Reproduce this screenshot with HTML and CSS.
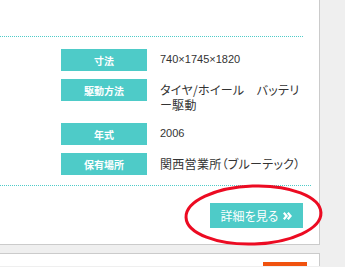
FILE: index.html
```html
<!DOCTYPE html>
<html lang="ja">
<head>
    <meta charset="UTF-8">
    <title>車両情報</title>
    <link rel="stylesheet" href="styles.css">
</head>
<body>
    <div class="card">
        <div class="card-head"></div>
        <div class="spec-list">
            <div class="spec-label">寸法</div>
            <div class="spec-value num">740×1745×1820</div>
            <div class="spec-label">駆動方法</div>
            <div class="spec-value">タイヤ/ホイール　バッテリー駆動</div>
            <div class="spec-label">年式</div>
            <div class="spec-value num">2006</div>
            <div class="spec-label">保有場所</div>
            <div class="spec-value">関西営業所（ブルーテック）</div>
        </div>
        <div class="card-foot">
            <a href="#" class="more-btn">詳細を見る
                <svg class="more-arrow" width="9" height="8" viewBox="0 0 9 8">
                    <path d="M0.8 0.8 L3.6 4 L0.8 7.2 M4.8 0.8 L7.6 4 L4.8 7.2" fill="none" stroke="white" stroke-width="2.2" />
                </svg>
            </a>
        </div>
    </div>

    <div class="card next-card">
        <div class="tag"></div>
    </div>

    <!-- 注釈の赤丸 -->
    <svg class="mark" width="345" height="267" viewBox="0 0 345 267">
        <ellipse cx="253.5" cy="215" rx="67.5" ry="29" fill="none" stroke="#ec0b22" stroke-width="3" transform="rotate(-2 253.5 215)" />
    </svg>
</body>
</html>
```

FILE: styles.css
```css
body {
    margin: 0;
    background-color: #efefef;
    font-family: 'Noto Sans CJK JP', 'Noto Sans', sans-serif;
    color: #333;
    width: 345px;
    height: 267px;
    overflow: hidden;
    position: relative;
}
.card {
    background-color: white;
    border-right: 1px solid #cbcbcb;
    border-bottom: 1px solid #cbcbcb;
    box-sizing: border-box;
    width: 320px;
    padding-right: 16px;
}
.card-head {
    height: 36px;
    border-bottom: 1px dotted #4ecbc8;
}
.spec-list {
    display: grid;
    grid-template-columns: 86px 141px;
    column-gap: 13px;
    row-gap: 8px;
    margin: 12px 0 0 61px;
}
.spec-label {
    height: 22px;
    background-color: #4ecbc8;
    color: white;
    font-size: 10px;
    font-weight: bold;
    display: flex;
    align-items: center;
    justify-content: center;
}
.spec-value {
    font-size: 12px;
    line-height: 15px;
    padding: 3px 0;
    line-break: loose;
    font-feature-settings: "palt";
    letter-spacing: 0.3px;
}
.spec-value.num {
    font-family: 'Liberation Sans', sans-serif;
    font-size: 11px;
    letter-spacing: 0;
}
.card-foot {
    margin: 10px -8px 0 0;
    border-top: 1px dotted #4ecbc8;
    padding: 17px 8px 16px 0;
    display: flex;
    justify-content: flex-end;
}
.more-btn {
    width: 93px;
    height: 25px;
    background-color: #4ecbc8;
    color: white;
    font-size: 12px;
    text-decoration: none;
    display: flex;
    align-items: center;
    justify-content: center;
    gap: 5px;
    font-feature-settings: "palt";
}
.next-card {
    margin-top: 8px;
    border-top: 1px solid #cbcbcb;
    border-bottom: none;
    padding: 8px 12px 0 0;
    display: flex;
    justify-content: flex-end;
}
.tag {
    width: 44px;
    height: 4px;
    background-color: #f0520f;
}
.mark {
    position: absolute;
    top: 0;
    left: 0;
}
```
